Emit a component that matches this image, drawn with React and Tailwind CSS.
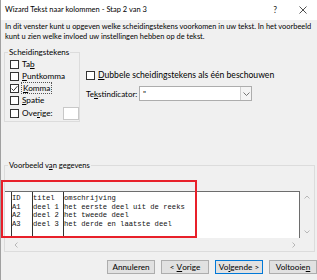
import React from 'react';

const UI = 'Lato, "Noto Sans", sans-serif';
const MONO = '"Liberation Mono", "DejaVu Sans Mono", monospace';

const ROWS = [
  ['ID', 'titel', 'omschrijving'],
  ['A1', 'deel 1', 'het eerste deel uit de reeks'],
  ['A2', 'deel 2', 'het tweede deel'],
  ['A3', 'deel 3', 'het derde en laatste deel'],
];

function Box({ checked }) {
  return (
    <span className="w-[9px] h-[9px] border border-[#333] bg-white flex items-center justify-center shrink-0">
      {checked && (
        <svg width="7" height="7" viewBox="0 0 7 7">
          <path d="M0.6 3.6 L2.6 5.6 L6.4 1.2" fill="none" stroke="#222" strokeWidth="0.9" />
        </svg>
      )}
    </span>
  );
}

function Check({ label, checked, focus }) {
  return (
    <div className="h-[12px] flex items-center gap-[3px]">
      <Box checked={checked} />
      <span className={focus ? 'outline outline-1 outline-dotted outline-[#555] px-[1px] leading-[10px]' : 'leading-[10px]'}>
        {label}
      </span>
    </div>
  );
}

function Btn({ children, primary }) {
  return (
    <div
      className={
        'w-[48px] h-[14px] flex items-center justify-center bg-[#e1e1e1] text-[8.2px] whitespace-pre ' +
        (primary ? 'border border-[#0078d7]' : 'border border-[#adadad]')
      }
    >
      {children}
    </div>
  );
}

export default function App() {
  return (
    <div className="relative w-[317px] h-[280px] bg-[#f0f0f0] overflow-hidden text-black border-l border-[#a0a0a0]" style={{ fontFamily: UI }}>
      {/* title bar */}
      <div className="h-[20px] bg-white flex items-center pl-[4px] text-[7.5px]">
        <span>Wizard Tekst naar kolommen - Stap 2 van 3</span>
        <span className="ml-auto text-[8.5px] text-[#222]">?</span>
        <svg className="ml-[22px] mr-[10px]" width="8" height="8" viewBox="0 0 8 8">
          <path d="M0.5 0.5 L7.5 7.5 M7.5 0.5 L0.5 7.5" stroke="#222" strokeWidth="0.8" />
        </svg>
      </div>

      {/* intro */}
      <div className="mt-[2px] pl-[4px] text-[7.45px] leading-[10px] whitespace-nowrap">
        <div>In dit venster kunt u opgeven welke scheidingstekens voorkomen in uw tekst. In het voorbeeld</div>
        <div>kunt u zien welke invloed uw instellingen hebben op de tekst.</div>
      </div>

      {/* delimiters + options */}
      <div className="flex items-start mt-[10px] text-[8.2px]">
        <div className="ml-[3px] w-[76px] border border-[#dcdcdc] pl-[5px] pb-[1px]">
          <div className="-mt-[6px] h-[10px] leading-[10px] w-fit bg-[#f0f0f0] px-[1px] -ml-[2px] text-[8px]">Scheidingstekens</div>
          <div className="pt-[1px]">
            <Check label={<>Ta<u>b</u></>} />
            <Check label={<><u>P</u>untkomma</>} />
            <Check label={<><u>K</u>omma</>} checked focus />
            <Check label={<><u>S</u>patie</>} />
            <div className="h-[14px] flex items-center gap-[3px]">
              <Box />
              <span className="leading-[10px]">Ove<u>r</u>ige:</span>
              <span className="ml-[7px] w-[20px] h-[13px] bg-white border border-[#c8c8c8]" />
            </div>
          </div>
        </div>

        <div className="ml-[6px] pt-[17px] text-[8.6px]">
          <div className="h-[12px] flex items-center gap-[3px]">
            <Box />
            <span className="leading-[10px]"><u>D</u>ubbele scheidingstekens als één beschouwen</span>
          </div>
          <div className="mt-[5px] flex items-center">
            <span className="w-[53px] shrink-0 whitespace-nowrap leading-[10px] text-[8px]">Te<u>k</u>stindicator:</span>
            <div className="w-[113px] h-[15px] bg-white border border-[#adadad] flex items-center">
              <span className="pl-[3px] flex-1 text-[8px]">"</span>
              <span className="w-[11px] h-full border-l border-[#cfcfcf] bg-[#f4f4f4] flex items-center justify-center">
                <svg width="7" height="4" viewBox="0 0 7 4">
                  <path d="M0.5 0.5 L3.5 3.5 L6.5 0.5" fill="none" stroke="#555" strokeWidth="0.8" />
                </svg>
              </span>
            </div>
          </div>
        </div>
      </div>

      {/* preview */}
      <div className="ml-[3px] mt-[43px] w-[311px] border border-[#dcdcdc] text-[7.6px]">
        <div className="-mt-[6px] ml-[3px] h-[10px] leading-[10px] w-fit bg-[#f0f0f0] px-[1px]">
          Voorbeeld v<u>a</u>n gegevens
        </div>
        <div className="mt-[21px] flex">
          <div className="w-[295px] h-[47px] bg-white border-t border-r border-[#6d6d6d] pl-[6px] overflow-hidden" style={{ fontFamily: MONO }}>
            <div className="flex h-full text-[7.2px] leading-[8.5px] text-[#111]">
              {[0, 1, 2].map((c) => (
                <div
                  key={c}
                  className={'border-l border-[#333] pt-[2px] whitespace-nowrap ' + (c === 0 ? 'w-[21px]' : c === 1 ? 'w-[31px]' : 'flex-1')}
                >
                  {ROWS.map((r, i) => (
                    <div key={i}>{r[c]}</div>
                  ))}
                </div>
              ))}
            </div>
          </div>
          <div className="flex-1 h-[47px] flex flex-col items-center justify-between py-[4px]">
            <svg width="6" height="4" viewBox="0 0 6 4">
              <path d="M0.5 3.5 L3 1 L5.5 3.5" fill="none" stroke="#a8a8a8" strokeWidth="0.8" />
            </svg>
            <svg width="6" height="4" viewBox="0 0 6 4">
              <path d="M0.5 0.5 L3 3 L5.5 0.5" fill="none" stroke="#a8a8a8" strokeWidth="0.8" />
            </svg>
          </div>
        </div>
        <div className="h-[13px] flex items-center justify-between pl-[9px] pr-[18px]">
          <svg width="4" height="6" viewBox="0 0 4 6">
            <path d="M3.5 0.5 L1 3 L3.5 5.5" fill="none" stroke="#a8a8a8" strokeWidth="0.8" />
          </svg>
          <svg width="4" height="6" viewBox="0 0 4 6">
            <path d="M0.5 0.5 L3 3 L0.5 5.5" fill="none" stroke="#a8a8a8" strokeWidth="0.8" />
          </svg>
        </div>
      </div>

      {/* buttons */}
      <div className="mt-[8px] flex justify-end gap-[6px]">
        <Btn>Annuleren</Btn>
        <Btn>{'< '}<u>V</u>orige</Btn>
        <Btn primary>Vo<u>l</u>gende{' >'}</Btn>
        <Btn>Voltooie<u>n</u></Btn>
      </div>

      {/* red annotation */}
      <div className="absolute left-[0px] top-[180px] w-[196px] h-[58px] border-2 border-[#e8202a] pointer-events-none" />
    </div>
  );
}
